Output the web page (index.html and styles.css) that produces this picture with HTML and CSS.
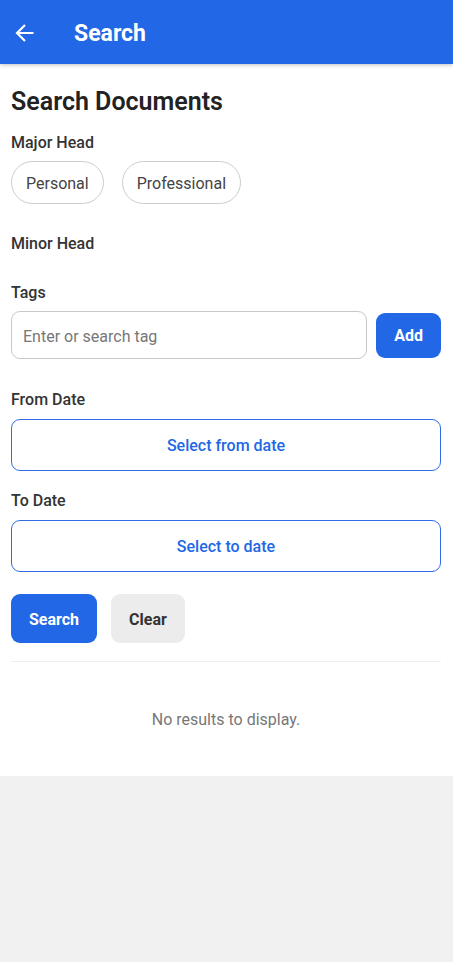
FILE: index.html
```html
<!DOCTYPE html>
<html lang="en">
<head>
<meta charset="utf-8">
<meta name="viewport" content="width=device-width, initial-scale=1">
<title>Search</title>
<link rel="stylesheet" href="styles.css">
</head>
<body>
<header class="app-bar">
  <button class="back" type="button" aria-label="Back">
    <svg viewBox="0 0 20 20" width="20" height="20" fill="none" stroke="currentColor" stroke-width="2.200" aria-hidden="true"><path d="M18.500 10H2.500M10 2L2 10l8 8"/></svg>
  </button>
  <div class="app-title">Search</div>
</header>
<main class="panel">
  <h1 class="heading">Search Documents</h1>
  <form>
    <section class="group">
      <h2 class="label">Major Head</h2>
      <div class="chips">
        <button class="chip" type="button">Personal</button>
        <button class="chip" type="button">Professional</button>
      </div>
    </section>
    <section class="group">
      <h2 class="label">Minor Head</h2>
    </section>
    <div class="group group-tags">
      <label class="label" for="tag">Tags</label>
      <div class="tag-row">
        <input class="tag-input" id="tag" type="text" placeholder="Enter or search tag">
        <button class="btn btn-add" type="button">Add</button>
      </div>
    </div>
    <div class="group-date">
      <label class="label" for="from">From Date</label>
      <button class="date" id="from" type="button">Select from date</button>
    </div>
    <div class="group-date">
      <label class="label" for="to">To Date</label>
      <button class="date" id="to" type="button">Select to date</button>
    </div>
    <div class="actions">
      <button class="btn" type="submit">Search</button>
      <button class="btn btn-clear" type="reset">Clear</button>
    </div>
  </form>
  <p class="empty">No results to display.</p>
</main>
</body>
</html>
```
FILE: styles.css
```css
* {
  box-sizing: border-box;
}

body {
  margin: 0;
  background: #f1f1f1;
  color: #333;
  font-family: Roboto, "Liberation Sans", sans-serif;
  font-size: 16px;
  line-height: 20px;
}

button,
input {
  margin: 0;
  font: inherit;
}

.app-bar {
  position: relative;
  display: flex;
  align-items: center;
  gap: 39px;
  height: 64px;
  padding: 2px 15px 0;
  background: #2267e6;
  color: #fff;
  box-shadow: 0 1px 4px rgba(0, 0, 0, 0.25);
}

.back {
  display: flex;
  padding: 0;
  border: 0;
  background: none;
  color: inherit;
}

.app-title {
  padding-top: 2px;
  font-size: 23px;
  font-weight: 700;
  line-height: 30px;
}

.panel {
  padding: 23px 12px 46px 11px;
  background: #fff;
}

.heading {
  margin: 0 0 16px;
  color: #222;
  font-size: 25px;
  font-weight: 600;
  line-height: 30px;
}

.group {
  margin-bottom: 29px;
}

.group-tags {
  margin-bottom: 31px;
}

.group-date {
  margin-bottom: 20px;
}

.label {
  display: block;
  margin: 0 0 8px;
  font-size: 16px;
  font-weight: 500;
}

.group-date .label {
  margin-bottom: 9px;
}

.chips {
  display: flex;
  gap: 18px;
}

.chip {
  height: 43px;
  margin-bottom: 1px;
  padding: 2px 14px 0 14px;
  border: 1px solid #ccc;
  border-radius: 22px;
  background: #fff;
  color: #444;
}

.tag-row {
  display: flex;
  align-items: center;
  gap: 9px;
}

.tag-input {
  flex: 1;
  min-width: 0;
  height: 48px;
  padding: 2px 11px 0;
  border: 1px solid #c8c8c8;
  border-radius: 9px;
  background: #fff;
  color: #333;
}

.tag-input::placeholder {
  color: #777;
  opacity: 1;
}

.btn {
  height: 49px;
  padding: 2px 18px 0;
  border: 0;
  border-radius: 9px;
  background: #2267e6;
  color: #fff;
  font-weight: 700;
}

.btn-add {
  height: 45px;
}

.btn-clear {
  background: #ececec;
  color: #333;
}

.date {
  display: block;
  width: 100%;
  height: 52px;
  padding: 2px 12px 0;
  border: 1px solid #2f6de8;
  border-radius: 9px;
  background: #fff;
  color: #2267e6;
  font-weight: 500;
}

.actions {
  display: flex;
  gap: 14px;
  margin-top: 22px;
  padding-bottom: 18px;
  border-bottom: 1px solid #eee;
}

.empty {
  margin: 48px 0 0;
  color: #777;
  text-align: center;
}
```
